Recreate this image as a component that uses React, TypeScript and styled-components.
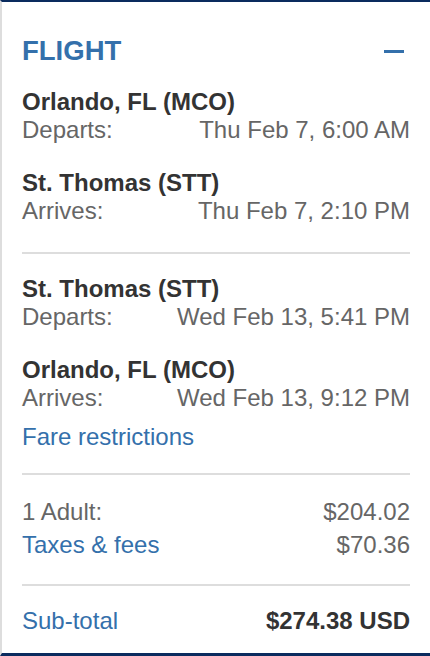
import React from 'react';
import styled, { createGlobalStyle } from 'styled-components';

const GlobalStyle = createGlobalStyle`
  html, body {
    margin: 0;
    padding: 0;
    background: #fff;
  }
  body {
    font-family: 'Liberation Sans', Arial, Helvetica, sans-serif;
  }
`;

const St = {
  Card: styled.section`
    box-sizing: border-box;
    width: 430px;
    border-top: 2px solid #0a2b5e;
    border-left: 2px solid #dddddd;
    border-bottom: 3px solid #0a2b5e;
    padding: 33px 20px 18px 20px;
    font-size: 24px;
    line-height: 28px;
    color: #666;
  `,
  Header: styled.div`
    display: flex;
    align-items: center;
    justify-content: space-between;
    height: 32px;
  `,
  Title: styled.h2`
    margin: 0;
    font-size: 27.5px;
    line-height: 32px;
    font-weight: bold;
    color: #3470ab;
  `,
  Toggle: styled.button`
    display: flex;
    align-items: center;
    justify-content: center;
    width: 20px;
    height: 20px;
    margin-right: 6px;
    padding: 0;
    border: 0;
    background: none;
    cursor: pointer;
    span {
      display: block;
      width: 20px;
      height: 3px;
      background: #3470ab;
    }
  `,
  Section: styled.div<{ $top: number }>`
    padding-top: ${(p) => p.$top}px;
  `,
  Leg: styled.div<{ $gap?: number }>`
    margin-top: ${(p) => p.$gap ?? 0}px;
  `,
  City: styled.div`
    font-weight: bold;
    color: #333;
  `,
  Row: styled.div<{ $gap?: number }>`
    display: flex;
    justify-content: space-between;
    margin-top: ${(p) => p.$gap ?? 0}px;
  `,
  Link: styled.a<{ $gap?: number }>`
    display: block;
    margin-top: ${(p) => p.$gap ?? 0}px;
    color: #3470ab;
    text-decoration: none;
    cursor: pointer;
  `,
  LinkInline: styled.a`
    color: #3470ab;
    text-decoration: none;
    cursor: pointer;
  `,
  Divider: styled.hr<{ $top: number }>`
    margin: ${(p) => p.$top}px 0 0 0;
    border: 0;
    height: 2px;
    background: #dddddd;
  `,
  Total: styled.span`
    font-weight: bold;
    color: #333;
  `,
};

interface LegInfo {
  city: string;
  label: string;
  time: string;
}

const outbound: LegInfo[] = [
  { city: 'Orlando, FL (MCO)', label: 'Departs:', time: 'Thu Feb 7, 6:00 AM' },
  { city: 'St. Thomas (STT)', label: 'Arrives:', time: 'Thu Feb 7, 2:10 PM' },
];

const inbound: LegInfo[] = [
  { city: 'St. Thomas (STT)', label: 'Departs:', time: 'Wed Feb 13, 5:41 PM' },
  { city: 'Orlando, FL (MCO)', label: 'Arrives:', time: 'Wed Feb 13, 9:12 PM' },
];

const Legs: React.FC<{ legs: LegInfo[] }> = ({ legs }) => (
  <>
    {legs.map((leg, i) => (
      <St.Leg key={leg.city + leg.label} $gap={i === 0 ? 0 : 25}>
        <St.City>{leg.city}</St.City>
        <St.Row>
          <span>{leg.label}</span>
          <span>{leg.time}</span>
        </St.Row>
      </St.Leg>
    ))}
  </>
);

export default function App() {
  return (
    <>
      <GlobalStyle />
      <St.Card>
        <St.Header>
          <St.Title>FLIGHT</St.Title>
          <St.Toggle aria-label="Collapse">
            <span />
          </St.Toggle>
        </St.Header>

        <St.Section $top={21}>
          <Legs legs={outbound} />
        </St.Section>
        <St.Divider $top={27} />

        <St.Section $top={21}>
          <Legs legs={inbound} />
          <St.Link $gap={11}>Fare restrictions</St.Link>
        </St.Section>
        <St.Divider $top={22} />

        <St.Section $top={23}>
          <St.Row>
            <span>1 Adult:</span>
            <span>$204.02</span>
          </St.Row>
          <St.Row $gap={5}>
            <St.LinkInline>Taxes &amp; fees</St.LinkInline>
            <span>$70.36</span>
          </St.Row>
        </St.Section>
        <St.Divider $top={25} />

        <St.Section $top={21}>
          <St.Row>
            <St.LinkInline>Sub-total</St.LinkInline>
            <St.Total>$274.38 USD</St.Total>
          </St.Row>
        </St.Section>
      </St.Card>
    </>
  );
}
